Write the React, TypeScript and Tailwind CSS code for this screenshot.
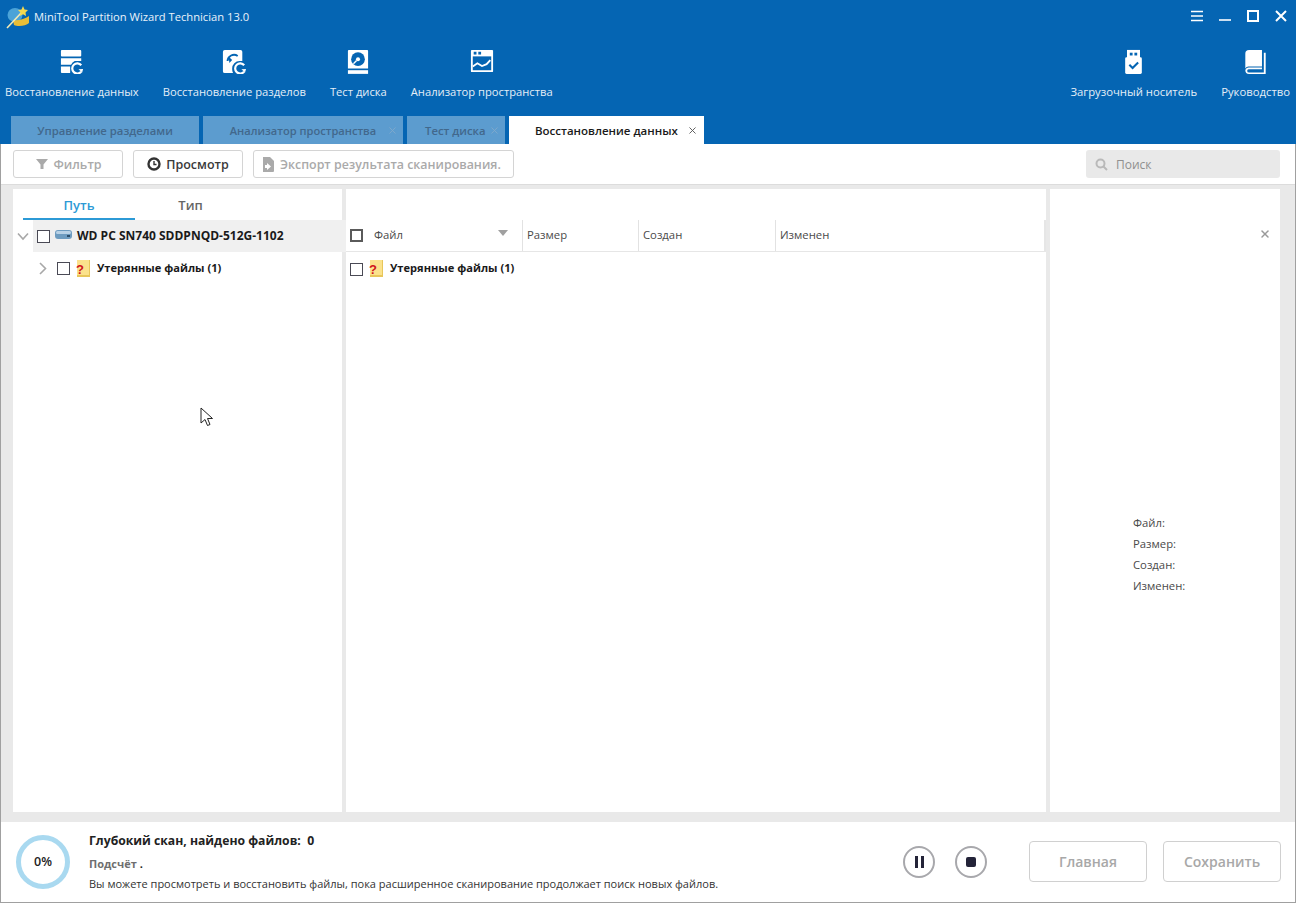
import { X } from "lucide-react";

function DataIcon() {
  return (
    <svg width="24" height="25" viewBox="0 0 26 27" fill="none">
      <rect x="1" y="1" width="22" height="7" rx="1" fill="#fff" />
      <path d="M1 10h22v3h-7a8 8 0 0 0-4 4H1z" fill="#fff" />
      <path d="M1 19h10v7H2a1 1 0 0 1-1-1z" fill="#fff" />
      <path d="M23 17.500a5.500 5.500 0 1 0 0 7" stroke="#fff" strokeWidth="2.400" />
      <path d="M20 22l4 3.500 1-4z" fill="#fff" />
    </svg>
  );
}

function PartitionIcon() {
  return (
    <svg width="24" height="25" viewBox="0 0 26 27" fill="none">
      <path d="M3 1h17a2 2 0 0 1 2 2v10h-3a8 8 0 0 0-8 8c0 2 .3 3.500 1 5H3a2 2 0 0 1-2-2V3a2 2 0 0 1 2-2z" fill="#fff" />
      <path d="M6 13a7 7 0 0 1 11-5.500" stroke="#0565b3" strokeWidth="2" />
      <path d="M7 8l4 4-3 3z" fill="#0565b3" />
      <path d="M24 17.500a5.500 5.500 0 1 0 0 7" stroke="#fff" strokeWidth="2.400" />
      <path d="M21 22l4 3.500 1-4z" fill="#fff" />
    </svg>
  );
}

function DiskIcon() {
  return (
    <svg width="22" height="25" viewBox="0 0 24 27" fill="none">
      <path d="M2 1h20a1 1 0 0 1 1 1v19H1V2a1 1 0 0 1 1-1z" fill="#fff" />
      <rect x="1" y="23" width="22" height="4" fill="#fff" />
      <circle cx="12" cy="11" r="7.500" fill="#0565b3" />
      <circle cx="12" cy="11" r="2.200" fill="#fff" />
      <path d="M7 16l3.500-3.500" stroke="#fff" strokeWidth="1.500" />
    </svg>
  );
}

function SpaceIcon() {
  return (
    <svg width="24" height="24" viewBox="0 0 26 26" fill="none">
      <rect x="1" y="1" width="24" height="24" rx="1" fill="#fff" />
      <rect x="3" y="8" width="20" height="15" fill="#0565b3" />
      <rect x="4" y="3" width="3" height="3" fill="#0565b3" />
      <rect x="9" y="3" width="3" height="3" fill="#0565b3" />
      <path d="M3 19l5-3.500 5 3 5-2 4-4.500" stroke="#fff" strokeWidth="2" />
    </svg>
  );
}

function UsbIcon() {
  return (
    <svg width="19" height="25" viewBox="0 0 20 27" fill="none">
      <path d="M3 1h14v9H3z" fill="#fff" />
      <rect x="6" y="4" width="3" height="3" fill="#0565b3" />
      <rect x="11" y="4" width="3" height="3" fill="#0565b3" />
      <rect x="1" y="9" width="18" height="18" rx="1.500" fill="#fff" />
      <path d="M5.500 17l3.500 3.500 6-6" stroke="#0565b3" strokeWidth="2.200" />
    </svg>
  );
}

function BookIcon() {
  return (
    <svg width="23" height="25" viewBox="0 0 24 27" fill="none">
      <path d="M5 1h14v18H5a4 4 0 0 0-4 2V5a4 4 0 0 1 4-4z" fill="#fff" />
      <path d="M21 4h2v23H5a4 4 0 0 1-4-4 4 4 0 0 1 4-3h14v2H5a2 2 0 0 0-2 1.500 2 2 0 0 0 2 2h16z" fill="#fff" />
    </svg>
  );
}

function Logo() {
  return (
    <svg width="24" height="24" viewBox="0 0 24 24" fill="none">
      <ellipse cx="9" cy="10" rx="7.500" ry="7" fill="#4ba3d8" />
      <path d="M7 15c5 1 12-1 16-4v7c-3 3-11 4-15 2z" fill="#e9bd36" />
      <path d="M1 23L16 7" stroke="#f3e9b5" strokeWidth="1.600" />
      <path d="M17 1l1.500 3.500L22 5l-2.500 2.500.5 3.500-3-1.800-3 1.800.5-3.500L12 5l3.500-.5z" fill="#f5d94e" />
    </svg>
  );
}

function FolderIcon() {
  return (
    <span className="relative block h-[17px] w-[14px] shrink-0">
      <span className="absolute right-0 top-0 h-[17px] w-[13px] border-b-2 border-r border-[#e8c65a] bg-[#fbe28c]" />
      <span className="absolute bottom-0 left-0 font-['Liberation_Sans'] text-[13px] font-bold leading-[14px] text-[#d0141a]">?</span>
    </span>
  );
}

function Check({ className = "" }: { className?: string }) {
  return <span className={`mt-[1px] block h-[13px] w-[13px] shrink-0 border border-[#4a4a55] bg-white ${className}`} />;
}

const tools = [
  { label: "Восстановление данных", icon: <DataIcon /> },
  { label: "Восстановление разделов", icon: <PartitionIcon /> },
  { label: "Тест диска", icon: <DiskIcon /> },
  { label: "Анализатор пространства", icon: <SpaceIcon /> },
];

function Tool({ label, icon, size = "text-[11.2px]" }: { label: string; icon: React.ReactNode; size?: string }) {
  return (
    <div className="flex flex-col items-center">
      <div className="flex h-[28px] items-center">{icon}</div>
      <div className={`mt-[9px] whitespace-nowrap leading-[16px] text-[#e4eef7] ${size}`}>{label}</div>
    </div>
  );
}

export default function App() {
  return (
    <div className="relative flex h-[903px] w-[1296px] flex-col overflow-hidden bg-white font-['Open_Sans',sans-serif]">
      {/* HEADER */}
      <header className="h-[144px] shrink-0 bg-[#0565b3]">
        <div className="flex h-[47px] items-start justify-between pl-[6px] pr-[8px] pt-[5px]">
          <div className="flex items-center gap-[4px]">
            <Logo />
            <span className="text-[11.2px] leading-[24px] text-[#eaf2fa]">MiniTool Partition Wizard Technician 13.0</span>
          </div>
          <div className="mt-[4px] flex items-center">
            <svg width="14" height="14" viewBox="0 0 14 14" stroke="#fff" strokeWidth="1.600"><path d="M1 2.500h12M1 7h12M1 11.500h12" /></svg>
            <svg className="ml-[14px]" width="14" height="14" viewBox="0 0 14 14" stroke="#fff" strokeWidth="1.600"><path d="M1 11h12" /></svg>
            <svg className="ml-[14px]" width="14" height="14" viewBox="0 0 14 14" stroke="#fff" strokeWidth="2" fill="none"><rect x="2" y="2" width="10" height="10" /></svg>
            <svg className="ml-[14px]" width="14" height="14" viewBox="0 0 14 14" stroke="#fff" strokeWidth="2"><path d="M2 2l10 10M12 2L2 12" /></svg>
          </div>
        </div>
        <div className="flex h-[69px] items-start justify-between pl-[5px] pr-[6px]">
          <div className="flex gap-[24px]">
            {tools.map((t) => (
              <Tool key={t.label} label={t.label} icon={t.icon} />
            ))}
          </div>
          <div className="flex gap-[24px]">
            <Tool label="Загрузочный носитель" icon={<UsbIcon />} size="text-[11.3px]" />
            <Tool label="Руководство" icon={<BookIcon />} size="text-[11.3px]" />
          </div>
        </div>
        <div className="flex h-[28px] gap-[4px] pl-[11px] text-[11.3px] font-semibold">
          <div className="flex w-[188px] items-center justify-center bg-[#5c9ccf] pt-[2px] text-[#42688c]">Управление разделами</div>
          <div className="relative flex w-[200px] items-center justify-center bg-[#5c9ccf] pt-[2px] text-[11.1px] text-[#42688c]">
            Анализатор пространства
            <X className="absolute right-[5px] top-[9px] text-[#7fa9cc]" size={11} />
          </div>
          <div className="relative flex w-[98px] items-center bg-[#5c9ccf] pl-[18px] pt-[2px] text-[#42688c]">
            Тест диска
            <X className="absolute right-[5px] top-[9px] text-[#7fa9cc]" size={11} />
          </div>
          <div className="relative flex w-[195px] items-center bg-white pl-[26px] pt-[2px] text-[11.5px] text-[#1a1a1a]">
            Восстановление данных
            <X className="absolute right-[6px] top-[9px] text-[#555]" size={11} />
          </div>
        </div>
      </header>

      <div className="flex min-h-0 flex-1 flex-col border-x border-b border-[#a0a0a0]">
        {/* TOOLBAR */}
        <div className="flex h-[40px] shrink-0 items-start pl-[12px] pr-[15px] pt-[6px] text-[12.5px] font-semibold">
          <button className="flex h-[28px] w-[110px] items-center justify-center gap-[5px] rounded-[3px] border border-[#d4d4d4] pl-[2px] pt-[2px] text-[#aaaaaa]">
            <svg className="-mt-[2px]" width="12" height="12" viewBox="0 0 12 12" fill="#aaaaaa"><path d="M0 1h12L7.500 6.500V11h-3V6.500z" /></svg>
            Фильтр
          </button>
          <button className="ml-[10px] flex h-[28px] w-[110px] items-center justify-center gap-[5px] rounded-[3px] border border-[#d4d4d4] pt-[2px] text-[#3a3a3a]">
            <svg className="-mt-[2px]" width="14" height="14" viewBox="0 0 14 14" fill="none"><circle cx="7" cy="7" r="5.500" stroke="#333" strokeWidth="2.400" /><path d="M7 4v3.500h2.500" stroke="#333" strokeWidth="1.400" /></svg>
            Просмотр
          </button>
          <button className="ml-[10px] flex h-[28px] w-[261px] items-center gap-[5px] rounded-[3px] border border-[#d4d4d4] pl-[8px] pt-[2px] text-[12.4px] text-[#aaaaaa]">
            <svg className="-mt-[2px]" width="13" height="15" viewBox="0 0 13 15" fill="#aaaaaa"><path d="M1 0h7l4 4v10a1 1 0 0 1-1 1H1zM5 6v2H3v3h2v2l4-3.500z" fillRule="evenodd" /></svg>
            Экспорт результата сканирования.
          </button>
          <div className="ml-auto flex h-[28px] w-[194px] items-center gap-[8px] rounded-[3px] bg-[#e9e9e9] pl-[9px] pt-[2px] text-[12px] font-normal text-[#8f8f8f]">
            <svg className="-mt-[2px]" width="13" height="13" viewBox="0 0 13 13" fill="none" stroke="#b9b9b9" strokeWidth="2"><circle cx="5.500" cy="5.500" r="4" /><path d="M8.500 8.500l3.500 3.500" /></svg>
            Поиск
          </div>
        </div>

        {/* MAIN */}
        <main className="flex min-h-0 flex-1 gap-[4px] border-t border-[#dcdcdc] bg-[#e9e9e9] pb-[10px] pl-[12px] pr-[15px] pt-[4px]">
          <section className="flex w-[329px] shrink-0 flex-col bg-white">
            <div className="flex h-[31px] pl-[10px] text-[13px] font-semibold">
              <div className="flex w-[112px] items-center justify-center border-b-2 border-[#2c9ad6] pt-[4px] text-[#2c9ad6]">Путь</div>
              <div className="flex w-[111px] items-center justify-center border-b-2 border-transparent pt-[4px] text-[#666]">Тип</div>
            </div>
            <div className="relative -mr-[4px] ml-[20px] flex h-[32px] items-center bg-[#f0f0f0] pl-[4px]">
              <svg className="absolute left-[-16px] top-[12px]" width="12" height="9" viewBox="0 0 12 9" fill="none" stroke="#a8a8a8" strokeWidth="1.600"><path d="M1 1.500L6 7l5-5.500" /></svg>
              <Check />
              <svg className="-mt-[2px] ml-[5px]" width="17" height="10" viewBox="0 0 17 10"><rect x="0" y="0" width="17" height="9" rx="3" fill="#6e9cc0" /><rect x="1" y="1" width="15" height="3" rx="1.500" fill="#b9d2e6" /><rect x="12" y="5" width="3" height="2" fill="#2c4e6a" /></svg>
              <span className="ml-[5px] whitespace-nowrap text-[12px] font-bold text-[#1a1a1a]">WD PC SN740 SDDPNQD-512G-1102</span>
            </div>
            <div className="flex h-[32px] items-center pl-[26px]">
              <svg width="8" height="13" viewBox="0 0 8 13" fill="none" stroke="#a8a8a8" strokeWidth="1.600"><path d="M1 1l5.500 5.500L1 12" /></svg>
              <Check className="ml-[10px]" />
              <span className="ml-[6px]"><FolderIcon /></span>
              <span className="ml-[7px] whitespace-nowrap text-[11.1px] font-bold text-[#1a1a1a]">Утерянные файлы (1)</span>
            </div>
          </section>

          <section className="flex w-[700px] shrink-0 flex-col bg-white pt-[31px]">
            <div className="flex h-[32px] items-center border-b border-[#e6e6e6] text-[11.3px] text-[#4a4a4a]">
              <div className="flex h-full w-[177px] items-center border-r border-[#e2e2e2] pl-[4px]">
                <span className="block h-[13px] w-[13px] border-2 border-[#5a5a5a]" />
                <span className="ml-[11px]">Файл</span>
                <span className="-mt-[6px] ml-auto mr-[14px] h-0 w-0 border-x-[5px] border-t-[6px] border-x-transparent border-t-[#a0a0a0]" />
              </div>
              <div className="flex h-full w-[116px] items-center border-r border-[#e2e2e2] pl-[4px]">Размер</div>
              <div className="flex h-full w-[137px] items-center border-r border-[#e2e2e2] pl-[4px]">Создан</div>
              <div className="flex h-full w-[270px] items-center border-r-2 border-[#e6e6e6] pl-[4px]">Изменен</div>
            </div>
            <div className="flex h-[33px] items-center pl-[4px]">
              <Check />
              <span className="ml-[6px]"><FolderIcon /></span>
              <span className="ml-[7px] whitespace-nowrap text-[11.1px] font-bold text-[#1a1a1a]">Утерянные файлы (1)</span>
            </div>
          </section>

          <section className="relative flex flex-1 flex-col justify-center bg-white pl-[83px] pt-[106px] text-[11.3px] leading-[21px] text-[#4a4a4a]">
            <X className="absolute right-[9px] top-[39px] text-[#9a9a9a]" size={12} strokeWidth={3} />
            <div>Файл:</div>
            <div>Размер:</div>
            <div>Создан:</div>
            <div>Изменен:</div>
          </section>
        </main>

        {/* FOOTER */}
        <footer className="flex h-[80px] shrink-0 items-center pl-[15px] pr-[14px]">
          <div className="flex h-[54px] w-[54px] shrink-0 items-center justify-center rounded-full border-[5px] border-[#a9d9f0] text-[12.5px] font-semibold text-[#222]">0%</div>
          <div className="ml-[19px] flex w-[760px] flex-col">
            <div className="text-[12.2px] font-bold leading-[18px] text-[#222]">Глубокий скан, найдено файлов:&nbsp; 0</div>
            <div className="mt-[6px] text-[11px] font-bold leading-[16px] text-[#6f6f6f]">Подсчёт <span className="text-[#222]">.</span></div>
            <div className="mt-[4px] whitespace-nowrap text-[11px] leading-[16px] text-[#333]">Вы можете просмотреть и восстановить файлы, пока расширенное сканирование продолжает поиск новых файлов.</div>
          </div>
          <button className="ml-[54px] flex h-[32px] w-[32px] items-center justify-center gap-[3px] rounded-full border-2 border-[#a8a8ac]">
            <span className="h-[12px] w-[3px] bg-[#232338]" />
            <span className="h-[12px] w-[3px] bg-[#232338]" />
          </button>
          <button className="ml-[20px] flex h-[32px] w-[32px] items-center justify-center rounded-full border-2 border-[#a8a8ac]">
            <span className="h-[10px] w-[10px] rounded-[2px] bg-[#232338]" />
          </button>
          <button className="ml-[42px] -mt-[1px] h-[41px] w-[118px] rounded-[4px] border border-[#d0d0d0] text-[14px] font-semibold text-[#a8a8a8]">Главная</button>
          <button className="ml-[16px] -mt-[1px] h-[41px] w-[118px] rounded-[4px] border border-[#d0d0d0] text-[14px] font-semibold text-[#a8a8a8]">Сохранить</button>
        </footer>
      </div>

      {/* mouse pointer */}
      <svg className="absolute left-[200px] top-[407px]" width="14" height="21" viewBox="0 0 14 21" fill="#fff" stroke="#222" strokeWidth="1"><path d="M1 1v15l4-3.500 2.500 6 2.500-1-2.500-6H12.500z" /></svg>
    </div>
  );
}
